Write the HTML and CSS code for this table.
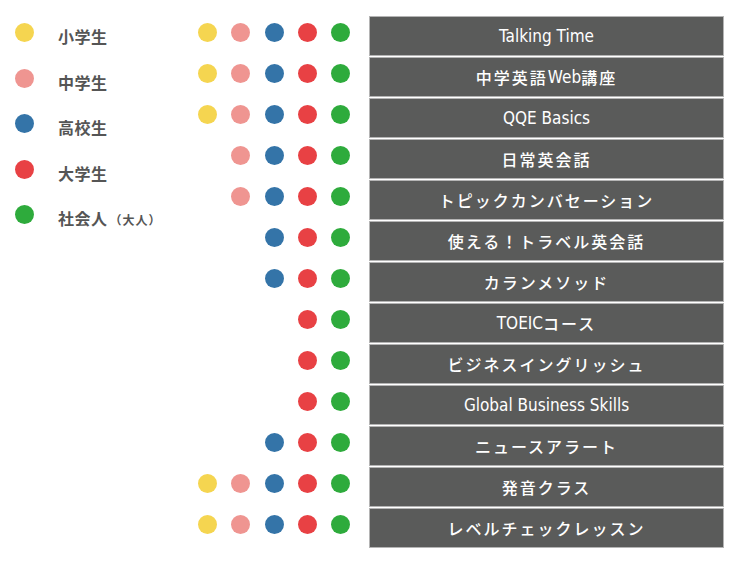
FILE: index.html
```html
<!DOCTYPE html>
<html lang="ja">
<head>
<meta charset="utf-8">
<link rel="stylesheet" href="styles.css">
</head>
<body>
<div class="page">
  <ul class="legend">
    <li class="legend-item"><span class="dot c1"></span><span class="label">小学生</span></li>
    <li class="legend-item"><span class="dot c2"></span><span class="label">中学生</span></li>
    <li class="legend-item"><span class="dot c3"></span><span class="label">高校生</span></li>
    <li class="legend-item"><span class="dot c4"></span><span class="label">大学生</span></li>
    <li class="legend-item"><span class="dot c5"></span><span class="label">社会人<small class="sub">（大人）</small></span></li>
  </ul>
  <div class="courses">
    <div class="row"><div class="dots"><span class="slot"><span class="dot c1"></span></span><span class="slot"><span class="dot c2"></span></span><span class="slot"><span class="dot c3"></span></span><span class="slot"><span class="dot c4"></span></span><span class="slot"><span class="dot c5"></span></span></div><div class="bar en">Talking Time</div></div>
    <div class="row"><div class="dots"><span class="slot"><span class="dot c1"></span></span><span class="slot"><span class="dot c2"></span></span><span class="slot"><span class="dot c3"></span></span><span class="slot"><span class="dot c4"></span></span><span class="slot"><span class="dot c5"></span></span></div><div class="bar">中学英語<span class="en-in">Web</span>講座</div></div>
    <div class="row"><div class="dots"><span class="slot"><span class="dot c1"></span></span><span class="slot"><span class="dot c2"></span></span><span class="slot"><span class="dot c3"></span></span><span class="slot"><span class="dot c4"></span></span><span class="slot"><span class="dot c5"></span></span></div><div class="bar en">QQE Basics</div></div>
    <div class="row"><div class="dots"><span class="slot"></span><span class="slot"><span class="dot c2"></span></span><span class="slot"><span class="dot c3"></span></span><span class="slot"><span class="dot c4"></span></span><span class="slot"><span class="dot c5"></span></span></div><div class="bar">日常英会話</div></div>
    <div class="row"><div class="dots"><span class="slot"></span><span class="slot"><span class="dot c2"></span></span><span class="slot"><span class="dot c3"></span></span><span class="slot"><span class="dot c4"></span></span><span class="slot"><span class="dot c5"></span></span></div><div class="bar">トピックカンバセーション</div></div>
    <div class="row"><div class="dots"><span class="slot"></span><span class="slot"></span><span class="slot"><span class="dot c3"></span></span><span class="slot"><span class="dot c4"></span></span><span class="slot"><span class="dot c5"></span></span></div><div class="bar">使える！トラベル英会話</div></div>
    <div class="row"><div class="dots"><span class="slot"></span><span class="slot"></span><span class="slot"><span class="dot c3"></span></span><span class="slot"><span class="dot c4"></span></span><span class="slot"><span class="dot c5"></span></span></div><div class="bar">カランメソッド</div></div>
    <div class="row"><div class="dots"><span class="slot"></span><span class="slot"></span><span class="slot"></span><span class="slot"><span class="dot c4"></span></span><span class="slot"><span class="dot c5"></span></span></div><div class="bar"><span class="en-in">TOEIC</span>コース</div></div>
    <div class="row"><div class="dots"><span class="slot"></span><span class="slot"></span><span class="slot"></span><span class="slot"><span class="dot c4"></span></span><span class="slot"><span class="dot c5"></span></span></div><div class="bar">ビジネスイングリッシュ</div></div>
    <div class="row"><div class="dots"><span class="slot"></span><span class="slot"></span><span class="slot"></span><span class="slot"><span class="dot c4"></span></span><span class="slot"><span class="dot c5"></span></span></div><div class="bar en">Global Business Skills</div></div>
    <div class="row"><div class="dots"><span class="slot"></span><span class="slot"></span><span class="slot"><span class="dot c3"></span></span><span class="slot"><span class="dot c4"></span></span><span class="slot"><span class="dot c5"></span></span></div><div class="bar">ニュースアラート</div></div>
    <div class="row"><div class="dots"><span class="slot"><span class="dot c1"></span></span><span class="slot"><span class="dot c2"></span></span><span class="slot"><span class="dot c3"></span></span><span class="slot"><span class="dot c4"></span></span><span class="slot"><span class="dot c5"></span></span></div><div class="bar">発音クラス</div></div>
    <div class="row"><div class="dots"><span class="slot"><span class="dot c1"></span></span><span class="slot"><span class="dot c2"></span></span><span class="slot"><span class="dot c3"></span></span><span class="slot"><span class="dot c4"></span></span><span class="slot"><span class="dot c5"></span></span></div><div class="bar">レベルチェックレッスン</div></div>
  </div>
</div>
</body>
</html>
```

FILE: styles.css
```css
html, body {
  margin: 0;
  padding: 0;
  background: #fff;
}
.page {
  display: flex;
  align-items: flex-start;
  padding-top: 16px;
  font-family: "Noto Sans CJK JP", "Noto Sans", sans-serif;
}
.legend {
  list-style: none;
  margin: 0;
  padding: 0 0 0 15px;
  width: 176px;
}
.legend-item {
  display: flex;
  align-items: flex-start;
  height: 45.5px;
}
.legend-item .dot {
  margin-top: 7px;
}
.label {
  margin-left: 24px;
  margin-top: 6px;
  font-size: 16px;
  line-height: 28px;
  font-weight: 700;
  color: #555;
  letter-spacing: 0.5px;
}
.sub {
  font-size: 12px;
  margin-left: 2px;
  letter-spacing: 1px;
}
.dot {
  display: block;
  width: 19px;
  height: 19px;
  border-radius: 50%;
}
.c1 { background: #f5d550; }
.c2 { background: #ef9591; }
.c3 { background: #3474a8; }
.c4 { background: #e84144; }
.c5 { background: #2eab3c; }
.courses {
  display: flex;
  flex-direction: column;
  gap: 1px;
}
.row {
  display: flex;
  height: 40px;
}
.dots {
  display: flex;
  width: 178px;
  padding-top: 6.5px;
  box-sizing: border-box;
}
.slot {
  width: 33.3px;
  display: flex;
  justify-content: center;
}
.bar {
  width: 355px;
  height: 40px;
  box-sizing: border-box;
  border: 1px solid #b4b4b4;
  background: #5a5b5a;
  color: #fff;
  display: flex;
  align-items: center;
  justify-content: center;
  font-size: 16px;
  font-weight: 500;
  letter-spacing: 2px;
}
.bar.en, .en-in {
  font-family: "DejaVu Sans Condensed", "DejaVu Sans", sans-serif;
  font-stretch: condensed;
  font-weight: 400;
  font-size: 17px;
  letter-spacing: 0;
}
```
